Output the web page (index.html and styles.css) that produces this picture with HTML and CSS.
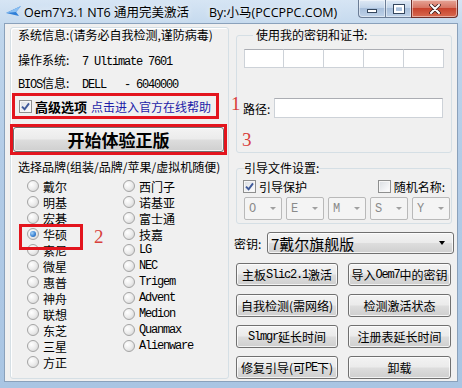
FILE: index.html
```html
<!DOCTYPE html>
<html lang="zh-CN">
<head>
<meta charset="utf-8">
<title>Oem7Y3.1 NT6 通用完美激活</title>
<link rel="stylesheet" href="styles.css">
</head>
<body>
<div class="window">
  <div class="titlebar">
    <svg class="app-icon" width="15" height="11" viewBox="0 0 15 11">
      <path d="M0 7 L15 0 L10 6 L13 10 Z" fill="#2f7fd8"/>
      <path d="M0 7 L10 6 L15 0 Z" fill="#8cc0f2"/>
    </svg>
    <span class="title-main">Oem7Y3.1 NT6 通用完美激活</span>
    <span class="title-by">By:小马(PCCPPC.COM)</span>
    <div class="caption-btns">
      <span class="cb cb-min"><i></i></span>
      <span class="cb cb-max"><i></i></span>
      <span class="cb cb-close">
        <svg width="12" height="10" viewBox="0 0 12 10"><path d="M2 1 L10 9 M10 1 L2 9" stroke="#3b1d1d" stroke-width="3.6" stroke-linecap="round"/><path d="M2 1 L10 9 M10 1 L2 9" stroke="#fff" stroke-width="2" stroke-linecap="round"/></svg>
      </span>
    </div>
  </div>

  <div class="client">
    <div class="left-panel">
      <div class="info r1">系统信息:(请务必自我检测,谨防病毒)</div>
      <div class="info r2"><span class="lbl">操作系统:</span><span class="m">7 Ultimate 7601</span></div>
      <div class="info r3"><span class="lbl"><span class="m">BIOS</span>信息:</span><span class="m">DELL   - 6040000</span></div>

      <div class="adv-box">
        <span class="chk"><svg width="9" height="9" viewBox="0 0 9 9"><path d="M1 4.6 L3.6 7.2 L8 1.4" fill="none" stroke="#3f5a9a" stroke-width="1.9"/></svg></span>
        <span class="adv-label">高级选项</span>
        <span class="adv-link">点击进入官方在线帮助</span>
      </div>

      <div class="start-box">
        <div class="btn start-btn">开始体验正版</div>
      </div>

      <div class="brand-title">选择品牌(组装/品牌/苹果/虚拟机随便)</div>
      <div class="brand-grid">
        <label class="rad"><span class="radio"></span>戴尔</label>
        <label class="rad"><span class="radio"></span>明基</label>
        <label class="rad"><span class="radio"></span>宏碁</label>
        <label class="rad marked"><span class="radio on"></span>华硕</label>
        <label class="rad"><span class="radio"></span>索尼</label>
        <label class="rad"><span class="radio"></span>微星</label>
        <label class="rad"><span class="radio"></span>惠普</label>
        <label class="rad"><span class="radio"></span>神舟</label>
        <label class="rad"><span class="radio"></span>联想</label>
        <label class="rad"><span class="radio"></span>东芝</label>
        <label class="rad"><span class="radio"></span>三星</label>
        <label class="rad"><span class="radio"></span>方正</label>
        <label class="rad"><span class="radio"></span>西门子</label>
        <label class="rad"><span class="radio"></span>诺基亚</label>
        <label class="rad"><span class="radio"></span>富士通</label>
        <label class="rad"><span class="radio"></span>技嘉</label>
        <label class="rad"><span class="radio"></span><span class="m">LG</span></label>
        <label class="rad"><span class="radio"></span><span class="m">NEC</span></label>
        <label class="rad"><span class="radio"></span><span class="m">Trigem</span></label>
        <label class="rad"><span class="radio"></span><span class="m">Advent</span></label>
        <label class="rad"><span class="radio"></span><span class="m">Medion</span></label>
        <label class="rad"><span class="radio"></span><span class="m">Quanmax</span></label>
        <label class="rad"><span class="radio"></span><span class="m">Alienware</span></label>
      </div>
    </div>

    <div class="right-panel">
      <fieldset class="grp grp-key">
        <legend>使用我的密钥和证书:</legend>
        <div class="key-strip">
          <span class="tb"></span><span class="tb"></span><span class="tb"></span><span class="tb"></span><span class="tb"></span>
        </div>
        <div class="path-row">
          <span class="path-lbl">路径:</span>
          <span class="tb path-tb"></span>
        </div>
      </fieldset>

      <fieldset class="grp grp-boot">
        <legend>引导文件设置:</legend>
        <div class="chk-row">
          <span class="chk"><svg width="9" height="9" viewBox="0 0 9 9"><path d="M1 4.6 L3.6 7.2 L8 1.4" fill="none" stroke="#3f5a9a" stroke-width="1.9"/></svg></span>
          <span class="chk-text">引导保护</span>
          <span class="chk chk-rand"></span>
          <span class="chk-text">随机名称:</span>
        </div>
        <div class="combo-row">
          <span class="dcombo"><span class="m">O</span><i></i></span>
          <span class="dcombo"><span class="m">E</span><i></i></span>
          <span class="dcombo"><span class="m">M</span><i></i></span>
          <span class="dcombo"><span class="m">S</span><i></i></span>
          <span class="dcombo"><span class="m">Y</span><i></i></span>
        </div>
      </fieldset>

      <div class="keysel-row">
        <span class="keysel-lbl">密钥:</span>
        <span class="btn keysel"><span class="keysel-val">7戴尔旗舰版</span><i></i></span>
      </div>

      <div class="btn-grid">
        <span class="btn">主板<span class="m">Slic2.1</span>激活</span>
        <span class="btn">导入<span class="m">Oem7</span>中的密钥</span>
        <span class="btn">自我检测(需网络)</span>
        <span class="btn">检测激活状态</span>
        <span class="btn"><span class="m">Slmgr</span>延长时间</span>
        <span class="btn">注册表延长时间</span>
        <span class="btn">修复引导(可<span class="m">PE</span>下)</span>
        <span class="btn">卸载</span>
      </div>
    </div>

    <span class="note note-1">1</span>
    <span class="note note-2">2</span>
    <span class="note note-3">3</span>
  </div>
</div>
</body>
</html>
```

FILE: styles.css
```css
* { box-sizing: border-box; }

html, body {
  margin: 0;
  padding: 0;
}

body {
  width: 462px;
  height: 388px;
  overflow: hidden;
  font-family: "Noto Sans CJK SC", "Liberation Sans", sans-serif;
  font-size: 12px;
  color: #000;
  background: #b9d1ea;
}

.m {
  font-family: "Liberation Mono", "Noto Sans CJK SC", monospace;
  font-size: 12px;
  letter-spacing: -1.2px;
}

/* ---------- window frame ---------- */
.window {
  width: 462px;
  height: 388px;
  display: flex;
  flex-direction: column;
  background: linear-gradient(180deg, #d6e5f4 0%, #c0d6ec 8%, #b3cce7 40%, #a9c5e3 100%);
}

.titlebar {
  height: 23px;
  flex: none;
  display: flex;
  align-items: center;
  font-family: "Open Sans", "Noto Sans CJK SC", sans-serif;
  font-size: 12.5px;
  color: #000;
}

.app-icon {
  flex: none;
  margin-left: 6px;
  width: 15px;
  height: 11px;
}

.title-main {
  flex: none;
  width: 185px;
  margin-left: 3px;
  white-space: nowrap;
  text-shadow: 0 0 6px rgba(255, 255, 255, 0.9);
}

.title-by {
  flex: none;
  white-space: nowrap;
  text-shadow: 0 0 6px rgba(255, 255, 255, 0.9);
}

.caption-btns {
  margin-left: auto;
  margin-right: 4px;
  align-self: flex-start;
  display: flex;
  height: 18px;
}

.cb {
  height: 18px;
  display: flex;
  align-items: center;
  justify-content: center;
  border: 1px solid #6b7d96;
  border-top: none;
  background: linear-gradient(180deg, #dfe9f5 0%, #c3d5ea 45%, #a8bfdb 50%, #bfd2e8 100%);
  box-shadow: inset 0 0 0 1px rgba(255, 255, 255, 0.45);
}

.cb-min {
  width: 27px;
  border-radius: 0 0 0 4px;
  border-right: none;
}

.cb-min i {
  display: block;
  width: 10px;
  height: 4px;
  margin-top: 5px;
  background: #fff;
  border: 1px solid #35475e;
}

.cb-max {
  width: 26px;
  border-right: none;
}

.cb-max i {
  display: block;
  width: 10px;
  height: 8px;
  border: 2px solid #fff;
  outline: 1px solid #35475e;
}

.cb-close {
  width: 47px;
  border-color: #6e2f2a;
  border-radius: 0 0 4px 0;
  background: linear-gradient(180deg, #e6a597 0%, #d77563 45%, #c8432d 50%, #d76a51 100%);
}

/* ---------- client area ---------- */
.client {
  flex: 1;
  margin: 0 4px 6px 4px;
  border: 1px solid #8aa1bb;
  background: #f0f0f0;
  display: flex;
  position: relative;
}

.left-panel {
  width: 219px;
  margin: 3px 0 2px 5px;
  padding: 0 0 0 7px;
  border: 1px solid #d5dfe5;
  border-radius: 3px;
  box-shadow: inset 1px 1px 0 #fff;
}

.info {
  height: 14px;
  line-height: 14px;
  white-space: pre;
}

.info.r2 { margin-top: 11px; }
.info.r3 { margin-top: 9px; }

.lbl {
  display: inline-block;
  width: 64px;
}

.adv-box {
  margin: 3px 0 0 -6px;
  width: 207px;
  height: 26px;
  border: 3px solid #e3151e;
  display: flex;
  align-items: center;
  padding-left: 4px;
}

.chk {
  flex: none;
  width: 13px;
  height: 13px;
  border: 1px solid #8e8f8f;
  background: linear-gradient(135deg, #d9dde2 0%, #f4f5f7 70%, #ffffff 100%);
  box-shadow: inset 0 0 0 1px #f6f6f6;
  display: inline-flex;
  align-items: center;
  justify-content: center;
}

.adv-label {
  margin-left: 3px;
  font-size: 13px;
  font-weight: bold;
}

.adv-link {
  margin-left: 4px;
  color: #1d1da8;
}

.start-box {
  margin: 5px 0 0 -8px;
  width: 217px;
  height: 31px;
  border: 3px solid #e3151e;
}

.btn {
  display: flex;
  align-items: center;
  justify-content: center;
  white-space: nowrap;
  border: 1px solid #707070;
  border-radius: 3px;
  background: linear-gradient(180deg, #f3f3f3 0%, #ebebeb 48%, #dddddd 52%, #cfcfcf 100%);
  box-shadow: inset 0 0 0 1px rgba(255, 255, 255, 0.75);
  color: #000;
}

.start-btn {
  height: 100%;
  font-size: 17px;
  font-weight: bold;
  line-height: 1;
}

.brand-title {
  margin-top: 5px;
  height: 14px;
  line-height: 14px;
  white-space: nowrap;
}

.brand-grid {
  margin-top: 4px;
  padding-left: 9px;
  display: grid;
  grid-template-columns: 96px 1fr;
  grid-template-rows: repeat(12, 16px);
  grid-auto-flow: column;
}

.rad {
  display: flex;
  align-items: center;
  gap: 4px;
  height: 16px;
  white-space: nowrap;
}

.radio {
  flex: none;
  width: 12px;
  height: 12px;
  border-radius: 50%;
  border: 1px solid #a4a4a4;
  background: radial-gradient(circle at 35% 35%, #ffffff 0%, #ececec 50%, #cdcdcd 100%);
  display: flex;
  align-items: center;
  justify-content: center;
}

.radio.on::after {
  content: "";
  width: 6px;
  height: 6px;
  border-radius: 50%;
  background: radial-gradient(circle at 35% 35%, #a7d3f8 0%, #3d86d6 55%, #184f9c 100%);
}

.rad.marked {
  position: relative;
}

.rad.marked::before {
  content: "";
  position: absolute;
  left: -8px;
  top: -2px;
  width: 58px;
  height: 20px;
  border: 3px solid #e3151e;
}

/* ---------- right panel ---------- */
.right-panel {
  width: 222px;
  margin-left: 4px;
  display: flex;
  flex-direction: column;
}

.grp {
  margin: 0 0 0 3px;
  width: 216px;
  border: 1px solid #d5dfe5;
  border-radius: 3px;
  min-width: 0;
}

.grp legend {
  line-height: 14px;
  height: 14px;
  white-space: nowrap;
}

.grp-key {
  margin-top: 4px;
  padding: 7px 1px 34px 7px;
}

.grp-key legend {
  margin-left: 9px;
  padding: 0 3px;
}

.key-strip {
  display: flex;
  height: 19px;
}

.tb {
  display: block;
  background: #fff;
  border: 1px solid #cdd2d8;
  border-top-color: #abadb3;
}

.key-strip .tb {
  width: 40px;
  height: 19px;
}

.key-strip .tb + .tb {
  margin-left: -1px;
  width: 41px;
}

.path-row {
  margin-top: 30px;
  height: 20px;
  display: flex;
  align-items: center;
}

.path-lbl {
  width: 31px;
  margin-left: -1px;
  padding-left: 0;
}

.path-tb {
  width: 169px;
  height: 20px;
}

.grp-boot {
  margin-top: 8px;
  padding: 3px 1px 3px 7px;
}

.grp-boot legend {
  margin: 0;
  padding: 0;
}

.chk-row {
  height: 16px;
  display: flex;
  align-items: center;
  margin-left: -1px;
}

.chk-text {
  margin-left: 3px;
}

.chk-rand {
  margin-left: auto;
}

.chk-row .chk-text:last-child {
  margin-right: 5px;
}

.combo-row {
  margin-top: 3px;
  display: flex;
  gap: 4px;
  height: 23px;
}

.dcombo {
  width: 38px;
  height: 23px;
  border: 1px solid #b9b9b9;
  border-radius: 2px;
  background: #f4f4f4;
  color: #8a8a8a;
  display: flex;
  align-items: center;
  justify-content: space-between;
  padding: 0 5px 0 4px;
}

.dcombo i {
  width: 0;
  height: 0;
  border-left: 3px solid transparent;
  border-right: 3px solid transparent;
  border-top: 3px solid #a0a0a0;
}

.keysel-row {
  margin-top: 8px;
  height: 22px;
  display: flex;
  align-items: center;
}

.keysel-lbl {
  width: 33px;
  margin-left: 1px;
}

.keysel {
  width: 187px;
  height: 22px;
  justify-content: space-between;
  padding: 0 8px 0 3px;
}

.keysel-val {
  font-size: 15px;
  line-height: 1;
}

.keysel i {
  width: 0;
  height: 0;
  border-left: 3.5px solid transparent;
  border-right: 3.5px solid transparent;
  border-top: 4px solid #000;
}

.btn-grid {
  margin: 9px 0 0 3px;
  display: grid;
  grid-template-columns: 102px 103px;
  grid-auto-rows: 23px;
  column-gap: 10px;
  row-gap: 8px;
}

/* ---------- annotations ---------- */
.note {
  position: absolute;
  font-family: "Liberation Serif", serif;
  font-size: 19px;
  line-height: 19px;
  color: #d8403c;
}

.note-1 { left: 226px; top: 70px; }
.note-2 { left: 89px; top: 203px; }
.note-3 { left: 237px; top: 106px; }
```
